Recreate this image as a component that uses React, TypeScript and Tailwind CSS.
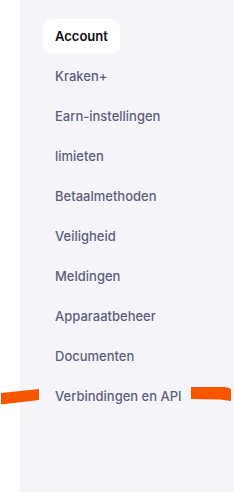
const items = [
  'Account',
  'Kraken+',
  'Earn-instellingen',
  'limieten',
  'Betaalmethoden',
  'Veiligheid',
  'Meldingen',
  'Apparaatbeheer',
  'Documenten',
  'Verbindingen en API',
]

export default function App() {
  return (
    <div className="relative flex h-[492px] w-[234px] bg-white font-['Inter',sans-serif]">
      <div className="ml-[20px] flex-1 bg-[#f5f5f9] pl-[23px] pt-[19px]">
        <nav className="flex flex-col items-start gap-[5px]">
          {items.map((item, i) => (
            <a
              key={item}
              className={
                i === 0
                  ? 'flex h-[35px] items-center rounded-[10px] bg-white px-3 text-[13px] font-semibold text-[#101014]'
                  : 'flex h-[35px] items-center px-3 text-[13px] font-medium text-[#5d5f7a]'
              }
            >
              {item}
            </a>
          ))}
        </nav>
      </div>
      {/* orange highlight strokes */}
      <svg className="absolute left-0 top-0 pointer-events-none" width="234" height="492">
        <polygon points="1,393 39,389 39,400 1,404.5" fill="#f75500" />
        <path d="M191,387 L224,387 Q229,387.5 231,389 L231,401 Q226,400 220,399.5 L191,399 Z" fill="#f75500" />
      </svg>
    </div>
  )
}
